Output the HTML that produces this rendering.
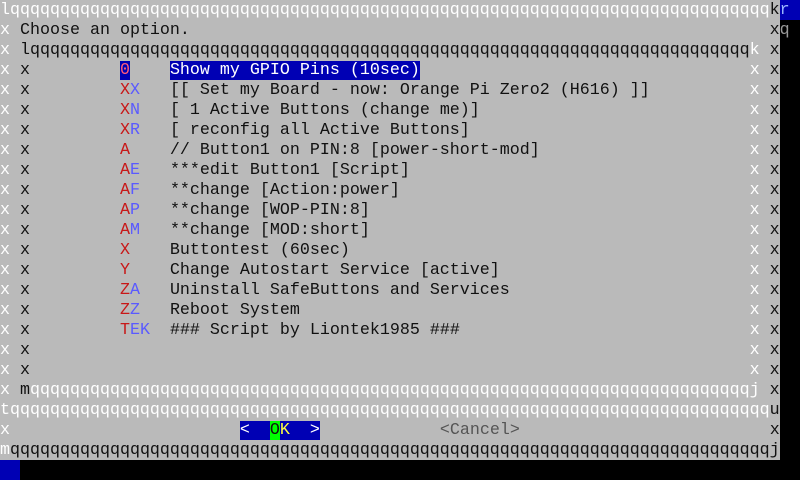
<!DOCTYPE html>
<html><head><meta charset="utf-8"><style>
html,body{margin:0;padding:0;background:#000;width:800px;height:480px;overflow:hidden}
#g{position:absolute;left:0;top:0;width:780px;height:460px;background:#bababa}
.r{position:absolute;left:0;height:20px;line-height:21px;white-space:pre;font-family:"Liberation Mono",monospace;font-size:16.67px;color:#111}
.w{color:#fff}.k{color:#111}.R{color:#c81818}.B{color:#5a5aff}
.bl{background:#0000b4}
</style></head><body>
<div id="g"></div>
<div style="position:absolute;left:780px;top:0;width:20px;height:20px;background:#0000b4"></div>
<div style="position:absolute;left:0;top:460px;width:20px;height:20px;background:#0000b4"></div>
<div class="r" style="top:0"><span class="w">lqqqqqqqqqqqqqqqqqqqqqqqqqqqqqqqqqqqqqqqqqqqqqqqqqqqqqqqqqqqqqqqqqqqqqqqqqqqq</span>k<span style="color:#9ab4ff">r</span></div>
<div class="r" style="top:20px"><span class="w">x</span> Choose an option.                                                          x<span style="color:#999">q</span></div>
<div class="r" style="top:40px"><span class="w">x</span> lqqqqqqqqqqqqqqqqqqqqqqqqqqqqqqqqqqqqqqqqqqqqqqqqqqqqqqqqqqqqqqqqqqqqqqqq<span class="w">k</span> x</div>
<div class="r" style="top:60px"><span class="w">x</span> x         <span class="bl" style="color:#ff5a78">0</span>    <span class="bl w">Show my GPIO Pins (10sec)</span>                                 <span class="w">x</span> x</div>
<div class="r" style="top:80px"><span class="w">x</span> x         <span class="R">X</span><span class="B">X</span>   [[ Set my Board - now: Orange Pi Zero2 (H616) ]]          <span class="w">x</span> x</div>
<div class="r" style="top:100px"><span class="w">x</span> x         <span class="R">X</span><span class="B">N</span>   [ 1 Active Buttons (change me)]                           <span class="w">x</span> x</div>
<div class="r" style="top:120px"><span class="w">x</span> x         <span class="R">X</span><span class="B">R</span>   [ reconfig all Active Buttons]                            <span class="w">x</span> x</div>
<div class="r" style="top:140px"><span class="w">x</span> x         <span class="R">A</span>    // Button1 on PIN:8 [power-short-mod]                     <span class="w">x</span> x</div>
<div class="r" style="top:160px"><span class="w">x</span> x         <span class="R">A</span><span class="B">E</span>   ***edit Button1 [Script]                                  <span class="w">x</span> x</div>
<div class="r" style="top:180px"><span class="w">x</span> x         <span class="R">A</span><span class="B">F</span>   **change [Action:power]                                   <span class="w">x</span> x</div>
<div class="r" style="top:200px"><span class="w">x</span> x         <span class="R">A</span><span class="B">P</span>   **change [WOP-PIN:8]                                      <span class="w">x</span> x</div>
<div class="r" style="top:220px"><span class="w">x</span> x         <span class="R">A</span><span class="B">M</span>   **change [MOD:short]                                      <span class="w">x</span> x</div>
<div class="r" style="top:240px"><span class="w">x</span> x         <span class="R">X</span>    Buttontest (60sec)                                        <span class="w">x</span> x</div>
<div class="r" style="top:260px"><span class="w">x</span> x         <span class="R">Y</span>    Change Autostart Service [active]                         <span class="w">x</span> x</div>
<div class="r" style="top:280px"><span class="w">x</span> x         <span class="R">Z</span><span class="B">A</span>   Uninstall SafeButtons and Services                        <span class="w">x</span> x</div>
<div class="r" style="top:300px"><span class="w">x</span> x         <span class="R">Z</span><span class="B">Z</span>   Reboot System                                             <span class="w">x</span> x</div>
<div class="r" style="top:320px"><span class="w">x</span> x         <span class="R">T</span><span class="B">EK</span>  ### Script by Liontek1985 ###                             <span class="w">x</span> x</div>
<div class="r" style="top:340px"><span class="w">x</span> x                                                                        <span class="w">x</span> x</div>
<div class="r" style="top:360px"><span class="w">x</span> x                                                                        <span class="w">x</span> x</div>
<div class="r" style="top:380px"><span class="w">x</span> m<span class="w">qqqqqqqqqqqqqqqqqqqqqqqqqqqqqqqqqqqqqqqqqqqqqqqqqqqqqqqqqqqqqqqqqqqqqqqqj</span> x</div>
<div class="r" style="top:400px"><span class="w">tqqqqqqqqqqqqqqqqqqqqqqqqqqqqqqqqqqqqqqqqqqqqqqqqqqqqqqqqqqqqqqqqqqqqqqqqqqqq</span>u</div>
<div class="r" style="top:420px"><span class="w">x</span>                       <span class="bl w">&lt;  </span><span style="background:#00ff00;color:#111">O</span><span class="bl" style="color:#ffff40">K</span><span class="bl w">  &gt;</span>            <span style="color:#555">&lt;Cancel&gt;</span>                         x</div>
<div class="r" style="top:440px"><span class="w">m</span>qqqqqqqqqqqqqqqqqqqqqqqqqqqqqqqqqqqqqqqqqqqqqqqqqqqqqqqqqqqqqqqqqqqqqqqqqqqqj</div>
</body></html>
